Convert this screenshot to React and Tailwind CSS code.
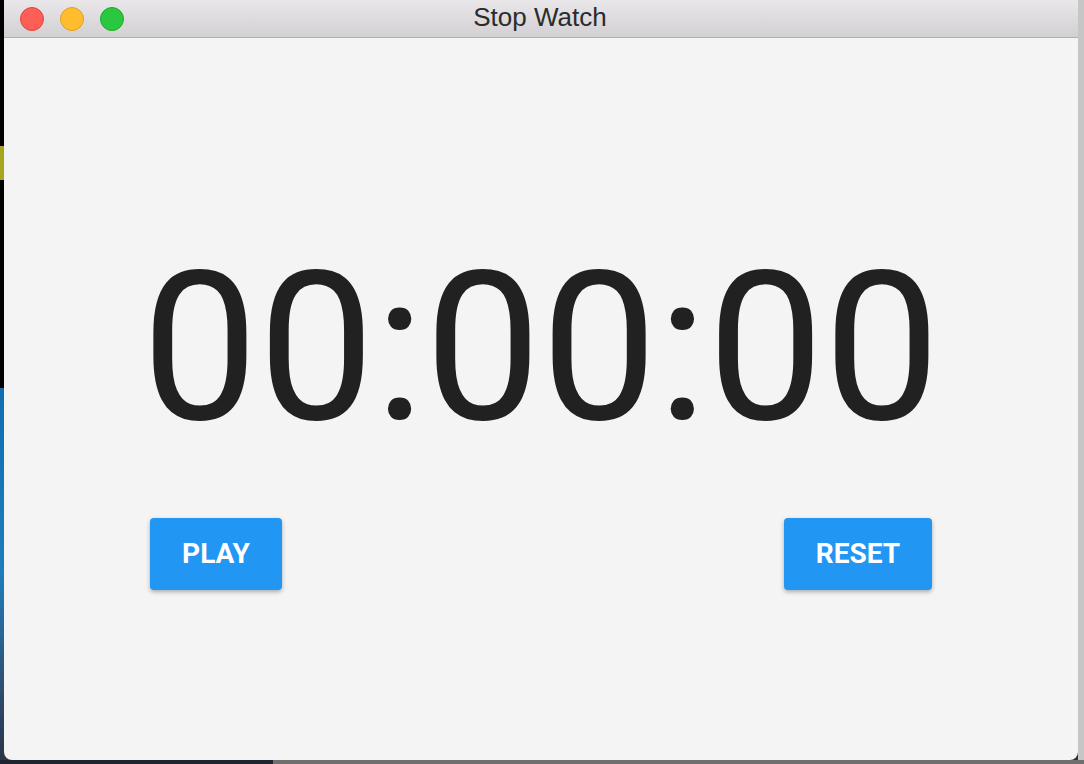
import React, { useState, useEffect, useRef } from "react";

const pad = (n) => String(n).padStart(2, "0");

const StopWatch = () => {
  const [running, setRunning] = useState(false);
  const [secs, setSecs] = useState(0);
  const timer = useRef(null);

  useEffect(() => {
    if (running) {
      timer.current = setInterval(() => setSecs((s) => s + 1), 1000);
    }
    return () => clearInterval(timer.current);
  }, [running]);

  const h = Math.floor(secs / 3600);
  const m = Math.floor((secs % 3600) / 60);
  const s = secs % 60;

  return (
    <div className="w-[1084px] h-[764px] flex flex-col bg-[#3a3a3a] overflow-hidden">
      <div className="flex flex-1">
        {/* desktop strip, left */}
        <div className="w-[4px] flex flex-col bg-black">
          <div className="h-[146px]" />
          <div className="h-[34px] bg-[#a8a520]" />
          <div className="h-[208px]" />
          <div className="flex-1 bg-gradient-to-b from-[#0f6fb0] via-[#1d7dbd] to-[#2a3448]" />
        </div>

        {/* window */}
        <div className="flex-1 flex flex-col rounded-b-[8px] overflow-hidden bg-[#f4f4f4] shadow-[1px_1px_2px_rgba(0,0,0,0.35)]">
          {/* title bar */}
          <div className="h-[38px] flex items-center bg-gradient-to-b from-[#e9e7e9] to-[#d2d0d2] border-b border-[#b1afb1]">
            <div className="flex items-center gap-[16px] pl-[16px]">
              <span className="w-[24px] h-[24px] rounded-full bg-[#fd5f57] border border-[#e0443e]" />
              <span className="w-[24px] h-[24px] rounded-full bg-[#febc2e] border border-[#dea123]" />
              <span className="w-[24px] h-[24px] rounded-full bg-[#2ac840] border border-[#1aab29]" />
            </div>
            <div className="flex-1 text-center pr-[122px] pb-[3px] text-[26px] leading-none text-[#2b2b2b] font-['Helvetica_Neue','Liberation_Sans',sans-serif]">
              Stop Watch
            </div>
          </div>

          {/* body */}
          <div className="flex-1 flex flex-col items-center pt-[207px] font-['Roboto',sans-serif]">
            <div className="text-[207px] leading-none text-[#212121]">
              {pad(h)}:{pad(m)}:{pad(s)}
            </div>
            <div className="w-full flex justify-between px-[146px] mt-[66px]">
              <button
                onClick={() => setRunning(!running)}
                className="h-[72px] w-[132px] rounded-[4px] bg-[#2196f3] text-white text-[28px] font-bold uppercase shadow-[0_2px_4px_rgba(0,0,0,0.3)]"
              >
                {running ? "Pause" : "Play"}
              </button>
              <button
                onClick={() => {
                  setRunning(false);
                  setSecs(0);
                }}
                className="h-[72px] w-[148px] rounded-[4px] bg-[#2196f3] text-white text-[28px] font-bold uppercase shadow-[0_2px_4px_rgba(0,0,0,0.3)]"
              >
                Reset
              </button>
            </div>
          </div>
        </div>

        {/* desktop strip, right */}
        <div className="w-[6px] bg-[#c6c6c6]" />
      </div>
      <div className="h-[4px] flex">
        <div className="w-[273px] bg-[#1e2430]" />
        <div className="flex-1 bg-[#6f6f6f]" />
      </div>
    </div>
  );
};

export default function App() {
  return <StopWatch />;
}
